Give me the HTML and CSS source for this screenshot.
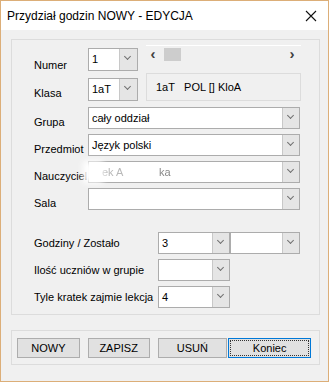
FILE: index.html
```html
<!DOCTYPE html>
<html>
<head>
<meta charset="utf-8">
<title>Przydział godzin NOWY - EDYCJA</title>
<link rel="stylesheet" href="styles.css">
</head>
<body>
<div class="window">
	<div class="titlebar">
		<span class="title">Przydział godzin NOWY - EDYCJA</span>
		<span class="close">
			<svg width="12" height="12" viewBox="0 0 12 12"><path d="M1 1L11 11M11 1L1 11" stroke="#111" stroke-width="1.1" fill="none"/></svg>
		</span>
	</div>

	<div class="group main">
		<div class="row r1">
			<label class="lbl">Numer</label>
			<div class="combo small"><span class="val">1</span><span class="btn"></span></div>
			<div class="scroll">
				<span class="arr">&lsaquo;</span>
				<span class="thumb"></span>
				<span class="arr right">&rsaquo;</span>
			</div>
		</div>
		<div class="row r2">
			<label class="lbl">Klasa</label>
			<div class="combo small"><span class="val">1aT</span><span class="btn"></span></div>
			<div class="info">1aT&nbsp;&nbsp; POL [] KloA</div>
		</div>
		<div class="row r3">
			<label class="lbl">Grupa</label>
			<div class="combo wide"><span class="val">cały oddział</span><span class="btn"></span></div>
		</div>
		<div class="row r4">
			<label class="lbl">Przedmiot</label>
			<div class="combo wide"><span class="val">Język polski</span><span class="btn"></span></div>
		</div>
		<div class="row r4">
			<label class="lbl">Nauczyciel</label>
			<div class="combo wide blurred"><span class="val"><span class="fog">ek A</span><span class="fog2">ka</span></span><span class="btn"></span></div>
		</div>
		<div class="row r4">
			<label class="lbl">Sala</label>
			<div class="combo wide"><span class="val"></span><span class="btn"></span></div>
		</div>

		<div class="row lower first">
			<label class="lbl long">Godziny / Zostało</label>
			<div class="combo mid"><span class="val">3</span><span class="btn"></span></div>
			<div class="combo mid2"><span class="val"></span><span class="btn"></span></div>
		</div>
		<div class="row lower">
			<label class="lbl long">Ilość uczniów w grupie</label>
			<div class="combo mid"><span class="val"></span><span class="btn"></span></div>
		</div>
		<div class="row lower">
			<label class="lbl long">Tyle kratek zajmie lekcja</label>
			<div class="combo mid"><span class="val">4</span><span class="btn"></span></div>
		</div>
	</div>

	<div class="group buttons">
		<button class="b1">NOWY</button>
		<button class="b2">ZAPISZ</button>
		<button class="b3">USUŃ</button>
		<button class="b4 focus"><span>Koniec</span></button>
	</div>
</div>
</body>
</html>
```

FILE: styles.css
```css
*{margin:0; padding:0; box-sizing:border-box;}
body{background:#fff; font-family:"Liberation Sans", Arial, sans-serif; font-size:11px; color:#000;}

/*okno*/
.window{width:329px; height:382px; border:1px solid #dcae78; background:#f0f0f0;}
.titlebar{height:29px; background:#fff; display:flex; align-items:center; justify-content:space-between; padding:0 11px 0 6px;}
.title{font-size:12px; color:#000;}
.close{display:flex;}

/*ramki*/
.group{border:1px solid #dcdcdc; margin-left:10px; margin-right:8px;}
.main{margin-top:9px; height:276px; padding:8px 0 0 22px;}
.buttons{margin-top:15px; height:35px; display:flex; align-items:flex-start; padding:7px 0 0 5px;}

.row{display:flex; align-items:flex-end;}
.r1{align-items:flex-start;}
.r1 .lbl{margin-top:11px;}
.r2{align-items:flex-start; margin-top:1px;}
.r2 .lbl{margin-top:14px;}
.r2 .combo{margin-top:5px;}
.r3{margin-top:6px;}
.r4{margin-top:5px;}
.lower{align-items:center; margin-top:5px;}
.lower.first{margin-top:22px;}
.lbl{width:54px; line-height:13px; white-space:nowrap; color:#000;}
.lower .lbl{width:124px;}

/*combo*/
.combo{height:22px; border:1px solid #acacac; background:#fff; display:flex; position:relative; z-index:1;}
.combo .val{flex:1; padding-left:3px; line-height:20px; white-space:nowrap; overflow:hidden;}
.combo .btn{width:17px; background:#e5e5e5; border-left:1px solid #c8c8c8; position:relative;}
.combo .btn:after{content:""; position:absolute; left:5px; top:5px; width:4px; height:4px; border-right:1px solid #707070; border-bottom:1px solid #707070; transform:rotate(45deg);}
.small{width:50px; height:23px;}
.small .val{line-height:21px;}
.small .btn{width:18px;}
.wide{width:212px;}
.mid{width:72px;}
.mid2{width:70px;}

/*nauczyciel zamazany*/
.blurred .val{padding-left:0;}
.fog{display:inline-block; padding-left:13px; width:70px; color:#b8b8b8; filter:blur(0.5px);}
.fog2{color:#8a8a8a; filter:blur(0.4px);}
.blurred:before{content:""; position:absolute; left:-6px; top:-1px; width:20px; height:22px; background:#fff; filter:blur(3px); z-index:2;}

/*przewijanie*/
.scroll{margin-left:8px; margin-top:-3px; width:155px; height:17px; border-top:1px solid #fff; display:flex; align-items:center;}
.scroll .arr{width:14px; text-align:center; font-size:15px; font-weight:bold; color:#404040; line-height:14px;}
.scroll .right{margin-left:auto; margin-right:2px;}
.scroll .thumb{width:17px; height:13px; background:#cdcdcd; margin-left:4px;}
.info{margin-left:8px; width:155px; height:28px; border:1px solid #dcdcdc; line-height:26px; padding-left:9px; white-space:nowrap;}

/*przyciski*/
.buttons button{height:20px; background:#e1e1e1; border:1px solid #adadad; font-family:"Liberation Sans", Arial, sans-serif; font-size:11px; color:#000; margin-right:8px;}
.b1{width:63px;}
.b2{width:62px;}
.b3{width:70px; margin-right:1px !important;}
.b4{width:83px; border:1px solid #0078d7 !important; padding:1px;}
.b4 span{display:block; height:100%; border:1px dotted #333; line-height:14px;}
```
